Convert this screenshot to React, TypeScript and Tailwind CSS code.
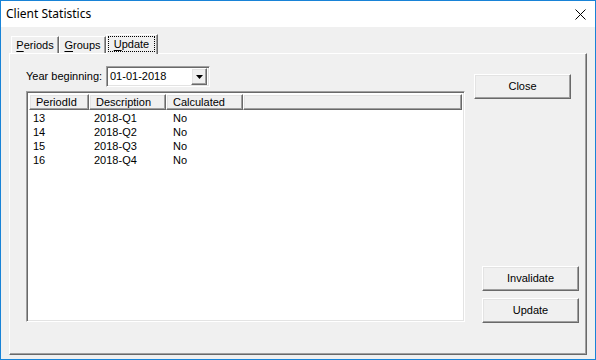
import React from 'react'

const raised =
  'border border-t-white border-l-white border-r-[#696969] border-b-[#696969] shadow-[inset_-1px_-1px_0_#a0a0a0,inset_1px_1px_0_#e3e3e3]'
const sunken =
  'border border-t-[#a0a0a0] border-l-[#a0a0a0] border-r-white border-b-white shadow-[inset_1px_1px_0_#696969,inset_-1px_-1px_0_#e3e3e3]'

function Button({ label, className = '' }: { label: string; className?: string }) {
  return (
    <div className={`h-[25px] w-[97px] flex items-center justify-center bg-[#f0f0f0] text-black ${raised} ${className}`}>
      {label}
    </div>
  )
}

function Tab({ first, rest, active, w }: { first: string; rest: string; active?: boolean; w: string }) {
  if (active) {
    return (
      <div
        className={`${w} h-[20px] -mb-[1px] relative z-10 bg-[#f0f0f0] flex items-stretch border-t border-l border-white border-r border-r-[#696969] shadow-[inset_-1px_0_0_#a0a0a0] pt-[1px] pl-[1px] pr-[2px] pb-[2px]`}
      >
        <span className="flex-1 flex items-center justify-center border border-dotted border-black">
          <span>
            <span className="underline underline-offset-[2px]">{first}</span>
            {rest}
          </span>
        </span>
      </div>
    )
  }
  return (
    <div
      className={`${w} h-[17px] flex items-center justify-center border-t border-l border-white border-r border-r-[#696969] shadow-[inset_-1px_0_0_#a0a0a0]`}
    >
      <span>
        <span className="underline underline-offset-[2px]">{first}</span>
        {rest}
      </span>
    </div>
  )
}

const rows = [
  ['13', '2018-Q1', 'No'],
  ['14', '2018-Q2', 'No'],
  ['15', '2018-Q3', 'No'],
  ['16', '2018-Q4', 'No'],
]

export default function App() {
  return (
    <div className="w-[596px] h-[360px] border border-[#1883d7] bg-[#f0f0f0] flex flex-col font-['Liberation_Sans',Arial,sans-serif] text-[11px] text-black overflow-hidden">
      {/* Title bar */}
      <div className="h-[26px] bg-white flex items-center justify-between pl-[5px] pr-[9px] shrink-0">
        <span className="text-[12px] font-['Noto_Sans',sans-serif]">Client Statistics</span>
        <svg width="11" height="11" viewBox="0 0 11 11" className="mt-[1px]">
          <path d="M0.5 0.5 L10.5 10.5 M10.5 0.5 L0.5 10.5" stroke="#000" strokeWidth="1" />
        </svg>
      </div>

      {/* Client area */}
      <div className="flex-1 flex flex-col px-[8px] pt-[8px] pb-[4px]">
        <div className="h-[18px] flex items-end pl-[2px] shrink-0">
          <Tab first="P" rest="eriods" w="w-[48px]" />
          <Tab first="G" rest="roups" w="w-[47px]" />
          <Tab first="U" rest="pdate" w="w-[52px]" active />
        </div>

        <div className="flex-1 flex border-t border-l border-white border-r border-b border-r-[#696969] border-b-[#696969] shadow-[inset_-1px_-1px_0_#a0a0a0]">
          {/* Left column */}
          <div className="flex flex-col pl-[16px] pt-[12px]">
            <div className="flex items-center h-[21px]">
              <span className="w-[80px]">Year beginning:</span>
              <div className={`w-[104px] h-[21px] bg-white flex items-center justify-between pl-[3px] pr-[2px] ${sunken}`}>
                <span>01-01-2018</span>
                <div className={`w-[16px] h-[17px] bg-[#f0f0f0] flex items-center justify-center ${raised}`}>
                  <svg width="7" height="4" viewBox="0 0 7 4">
                    <path d="M0 0 H7 L3.5 4 Z" fill="#000" />
                  </svg>
                </div>
              </div>
            </div>

            <div className={`mt-[4px] w-[439px] h-[231px] bg-white flex flex-col p-[2px] ${sunken}`}>
              <div className="flex h-[16px] shrink-0">
                <div className={`w-[60px] h-full bg-[#f0f0f0] flex items-center pl-[6px] ${raised}`}>PeriodId</div>
                <div className={`w-[77px] h-full bg-[#f0f0f0] flex items-center pl-[6px] ${raised}`}>Description</div>
                <div className={`w-[77px] h-full bg-[#f0f0f0] flex items-center pl-[6px] ${raised}`}>Calculated</div>
                <div className={`flex-1 h-full bg-[#f0f0f0] ${raised}`} />
              </div>
              <div className="pt-[1px]">
                {rows.map((r) => (
                  <div key={r[0]} className="flex h-[14px] items-center">
                    <div className="w-[60px] pl-[4px]">{r[0]}</div>
                    <div className="w-[77px] pl-[5px]">{r[1]}</div>
                    <div className="w-[77px] pl-[7px]">{r[2]}</div>
                  </div>
                ))}
              </div>
            </div>
          </div>

          {/* Right column */}
          <div className="flex flex-col pt-[20px]">
            <Button label="Close" className="ml-[9px]" />
            <Button label="Invalidate" className="ml-[17px] mt-[167px]" />
            <Button label="Update" className="ml-[17px] mt-[7px]" />
          </div>
        </div>
      </div>
    </div>
  )
}
